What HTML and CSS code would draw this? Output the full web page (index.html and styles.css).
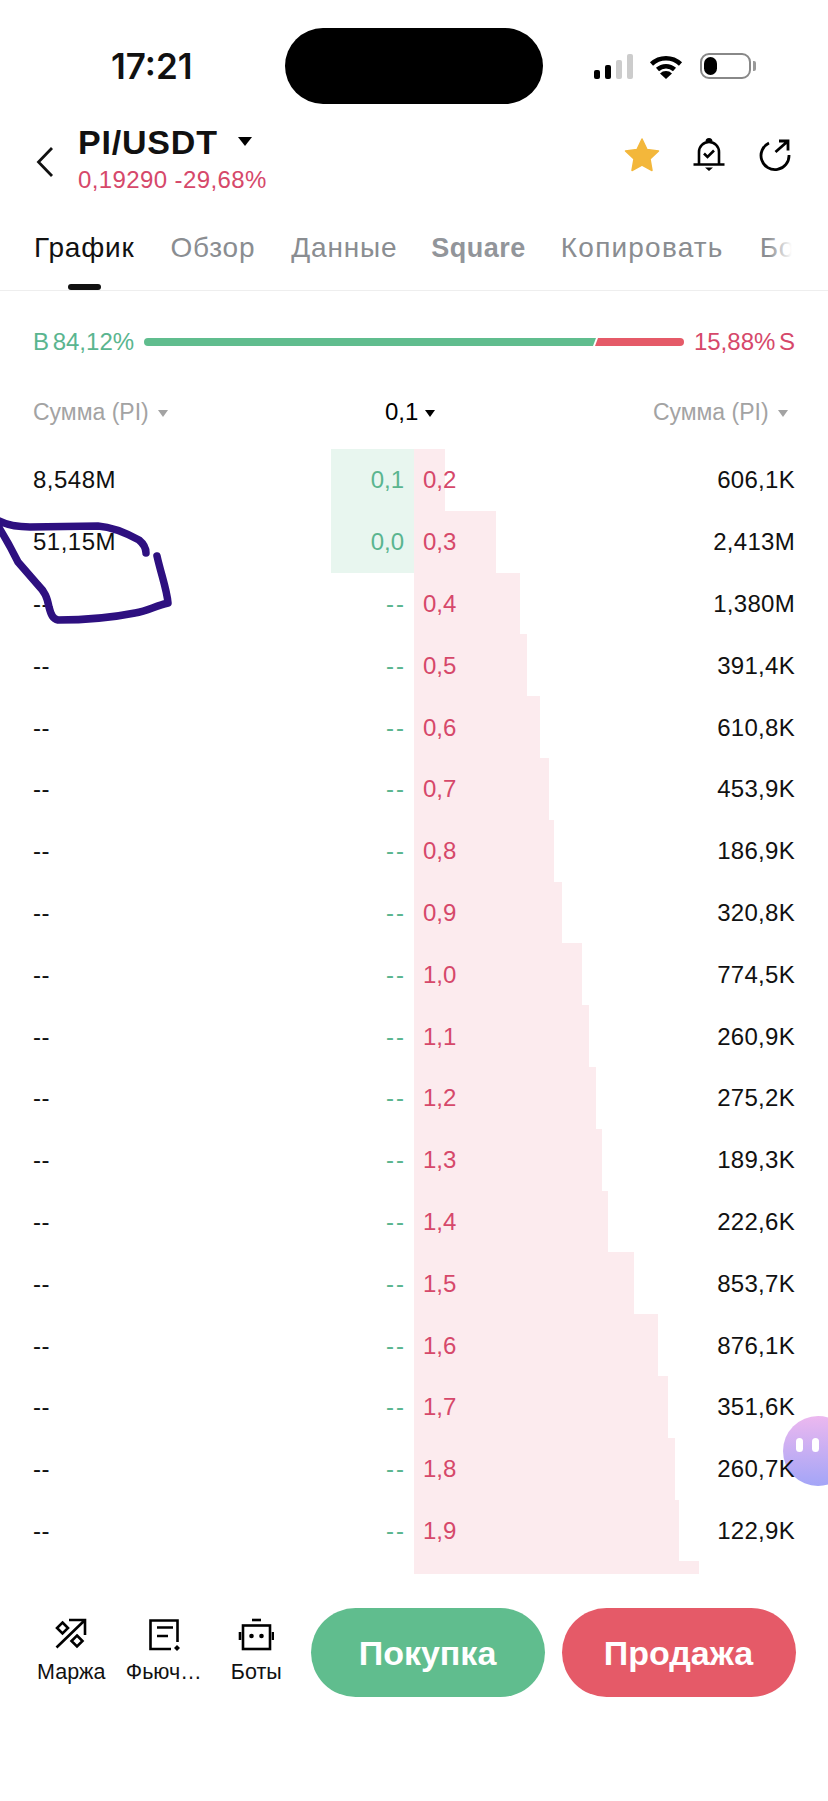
FILE: index.html
```html
<!DOCTYPE html>
<html lang="ru">
<head>
<meta charset="utf-8">
<title>PI/USDT</title>
<link rel="stylesheet" href="styles.css">
</head>
<body>
<div class="page">
  <div class="status">
    <div class="time">17:21</div>
    <div class="island"></div>
    <div class="sys">
      <div class="signal"><i class="s1"></i><i class="s2"></i><i class="s3"></i><i class="s4"></i></div>
      <svg class="wifi" width="34" height="25" viewBox="0 0 34 25"><path d="M2.5 10A21 21 0 0 1 31.500 10M8.500 15.500A12.500 12.500 0 0 1 25.500 15.500" fill="none" stroke="#000" stroke-width="4.500"/><path d="M17 25L11 19.500A8.500 8.500 0 0 1 23 19.500Z" fill="#000"/></svg>
      <div class="battery"><i></i></div>
      <div class="nub"></div>
    </div>
  </div>

  <div class="nav">
    <svg class="back" width="18" height="32" viewBox="0 0 18 32"><path d="M16 2L2.500 16L16 30" fill="none" stroke="#111" stroke-width="2.800"/></svg>
    <div class="pair">
      <div class="pair-name">PI/USDT <span class="caret caret-lg"></span></div>
      <div class="pair-price">0,19290 -29,68%</div>
    </div>
    <div class="nav-icons">
      <svg width="36" height="36" viewBox="0 0 36 36"><path d="M18 2L23 12.500L34.500 14L26 22L28 33.500L18 28L8 33.500L10 22L1.500 14L13 12.500Z" fill="#f3b73b" stroke="#f3b73b" stroke-width="1.500" stroke-linejoin="round"/></svg>
      <svg width="34" height="36" viewBox="0 0 34 36"><path d="M7 27V15A10 10 0 0 1 27 15V27M1.500 27.500H32.500" fill="none" stroke="#000" stroke-width="2.600"/><path d="M13.500 4.500A3.500 3.500 0 0 1 20.500 4.500ZM13 30.500H21L17 34Z" fill="#000"/><path d="M12 16.500L15.500 20L22 13.500" fill="none" stroke="#000" stroke-width="2.600"/></svg>
      <svg width="34" height="34" viewBox="0 0 34 34"><path d="M11 5A14 14 0 1 0 31 17" fill="none" stroke="#000" stroke-width="2.800"/><path d="M17.500 14L30 3M21 3H30V12.500" fill="none" stroke="#000" stroke-width="2.800"/></svg>
    </div>
  </div>

  <div class="tabs">
    <div class="tab active">График</div>
    <div class="tab">Обзор</div>
    <div class="tab">Данные</div>
    <div class="tab strong">Square</div>
    <div class="tab wide">Копировать</div>
    <div class="tab">Боты</div>
  </div>

  <div class="ratio">
    <div class="ratio-buy">B 84,12%</div>
    <div class="ratio-bar"><div class="ratio-g"></div><div class="ratio-r"></div></div>
    <div class="ratio-sell">15,88% S</div>
  </div>

  <div class="head">
    <div class="head-l">Сумма (PI) <span class="caret caret-grey"></span></div>
    <div class="head-m">0,1 <span class="caret"></span></div>
    <div class="head-r">Сумма (PI) <span class="caret caret-grey"></span></div>
  </div>

  <div class="bubble"><i></i><i></i></div>

  <div class="book">
    <div class="row"><span class="ask-bar" style="width:31px"></span><span class="bid-bar"></span><span class="ql">8,548M</span><span class="bid">0,1</span><span class="ask">0,2</span><span class="qr">606,1K</span></div>
    <div class="row"><span class="ask-bar" style="width:82px"></span><span class="bid-bar"></span><span class="ql">51,15M</span><span class="bid">0,0</span><span class="ask">0,3</span><span class="qr">2,413M</span></div>
    <div class="row"><span class="ask-bar" style="width:106px"></span><span class="ql">--</span><span class="bid dash">--</span><span class="ask">0,4</span><span class="qr">1,380M</span></div>
    <div class="row"><span class="ask-bar" style="width:113px"></span><span class="ql">--</span><span class="bid dash">--</span><span class="ask">0,5</span><span class="qr">391,4K</span></div>
    <div class="row"><span class="ask-bar" style="width:126px"></span><span class="ql">--</span><span class="bid dash">--</span><span class="ask">0,6</span><span class="qr">610,8K</span></div>
    <div class="row"><span class="ask-bar" style="width:135px"></span><span class="ql">--</span><span class="bid dash">--</span><span class="ask">0,7</span><span class="qr">453,9K</span></div>
    <div class="row"><span class="ask-bar" style="width:140px"></span><span class="ql">--</span><span class="bid dash">--</span><span class="ask">0,8</span><span class="qr">186,9K</span></div>
    <div class="row"><span class="ask-bar" style="width:148px"></span><span class="ql">--</span><span class="bid dash">--</span><span class="ask">0,9</span><span class="qr">320,8K</span></div>
    <div class="row"><span class="ask-bar" style="width:168px"></span><span class="ql">--</span><span class="bid dash">--</span><span class="ask">1,0</span><span class="qr">774,5K</span></div>
    <div class="row"><span class="ask-bar" style="width:175px"></span><span class="ql">--</span><span class="bid dash">--</span><span class="ask">1,1</span><span class="qr">260,9K</span></div>
    <div class="row"><span class="ask-bar" style="width:182px"></span><span class="ql">--</span><span class="bid dash">--</span><span class="ask">1,2</span><span class="qr">275,2K</span></div>
    <div class="row"><span class="ask-bar" style="width:188px"></span><span class="ql">--</span><span class="bid dash">--</span><span class="ask">1,3</span><span class="qr">189,3K</span></div>
    <div class="row"><span class="ask-bar" style="width:194px"></span><span class="ql">--</span><span class="bid dash">--</span><span class="ask">1,4</span><span class="qr">222,6K</span></div>
    <div class="row"><span class="ask-bar" style="width:220px"></span><span class="ql">--</span><span class="bid dash">--</span><span class="ask">1,5</span><span class="qr">853,7K</span></div>
    <div class="row"><span class="ask-bar" style="width:244px"></span><span class="ql">--</span><span class="bid dash">--</span><span class="ask">1,6</span><span class="qr">876,1K</span></div>
    <div class="row"><span class="ask-bar" style="width:254px"></span><span class="ql">--</span><span class="bid dash">--</span><span class="ask">1,7</span><span class="qr">351,6K</span></div>
    <div class="row"><span class="ask-bar" style="width:261px"></span><span class="ql">--</span><span class="bid dash">--</span><span class="ask">1,8</span><span class="qr">260,7K</span></div>
    <div class="row"><span class="ask-bar" style="width:265px"></span><span class="ql">--</span><span class="bid dash">--</span><span class="ask">1,9</span><span class="qr">122,9K</span></div>
    <div class="row row-cut"><span class="ask-bar" style="width:285px"></span></div>
  </div>

  <div class="actions">
    <div class="tool">
      <svg width="36" height="36" viewBox="0 0 36 36"><path d="M3.500 30.500L32 3M16 3H32V18" fill="none" stroke="#000" stroke-width="2.600"/><path d="M9.500 5.500L15 11L9.500 16.500L4 11ZM24 18.500L29.500 24L24 29.500L18.500 24Z" fill="none" stroke="#000" stroke-width="2.600"/></svg>
      <span>Маржа</span>
    </div>
    <div class="tool">
      <svg width="36" height="36" viewBox="0 0 36 36"><path d="M31.500 25V3.500H4.500V32H25M11 10.500H27M11 19H22" fill="none" stroke="#000" stroke-width="2.600"/><path d="M31 28L34 31L31 34L28 31Z" fill="#000"/></svg>
      <span>Фьюч…</span>
    </div>
    <div class="tool">
      <svg width="36" height="36" viewBox="0 0 36 36"><path d="M14 3H23" fill="none" stroke="#000" stroke-width="2.600"/><rect x="5" y="8.500" width="27" height="23.500" fill="none" stroke="#000" stroke-width="2.600"/><path d="M2 15V23M35 15V23" fill="none" stroke="#000" stroke-width="2.600"/><circle cx="13.500" cy="19" r="2.300" fill="#000"/><circle cx="23.500" cy="19" r="2.300" fill="#000"/></svg>
      <span>Боты</span>
    </div>
    <div class="btn btn-buy">Покупка</div>
    <div class="btn btn-sell">Продажа</div>
  </div>

  <svg class="scribble" width="180" height="110" viewBox="0 0 180 110"><path d="M-3 8C8 14 18 15 30 15L98 14C112 15 128 22 139 28C145 33 146 37 146 41M157 44C161 62 167 78 168 91C155 94 148 99 135 101C110 106 85 108 58 108C53 107 51 103 49 95C47 85 45 80 38 73L18 50C12 38 6 27 -2 14" fill="none" stroke="#2e1080" stroke-width="7.500" stroke-linecap="round" stroke-linejoin="round"/></svg>
</div>
</body>
</html>
```
FILE: styles.css
```css
* { box-sizing: border-box; }
html, body { margin: 0; padding: 0; background: #fff; }
body { font-family: "Liberation Sans", Arial, sans-serif; color: #111; }
.page { position: relative; width: 828px; height: 1801px; overflow: hidden; }

/* status bar */
.status { height: 120px; padding: 28px 0 16px; display: flex; align-items: center; }
.time { width: 285px; padding-left: 111px; font-family: Inter, "Liberation Sans", sans-serif; font-size: 35px; font-weight: 600; line-height: 76px; }
.island { width: 258px; height: 76px; border-radius: 38px; background: #000; }
.sys { display: flex; align-items: flex-end; height: 26px; margin-left: 51px; margin-top: -1px; }
.signal { display: flex; align-items: flex-end; gap: 5px; height: 25px; margin-right: 16px; }
.signal i { display: block; width: 6px; border-radius: 2px; background: #000; }
.signal .s1 { height: 9px; }
.signal .s2 { height: 14px; }
.signal .s3 { height: 19px; background: #ccc; }
.signal .s4 { height: 25px; background: #ccc; }
.wifi { margin-right: 17px; }
.battery { width: 51px; height: 26px; padding: 2px; border: 2px solid #888; border-radius: 9px; }
.battery i { display: block; width: 13px; height: 100%; border-radius: 7px; background: #000; }
.nub { width: 3px; height: 10px; margin: 0 0 8px 2px; border-radius: 0 2px 2px 0; background: #999; }

/* nav */
.nav { height: 76px; display: flex; align-items: center; padding-left: 36px; }
.back { margin: 8px 24px 0 0; }
.pair-name { font-size: 34px; line-height: 44px; font-weight: 700; letter-spacing: 0.8px; white-space: nowrap; }
.pair-price { font-size: 24px; line-height: 32px; letter-spacing: 0.4px; color: #d6486a; white-space: nowrap; }
.caret { display: inline-block; width: 0; height: 0; border-left: 5.500px solid transparent; border-right: 5.500px solid transparent; border-top: 7px solid #000; vertical-align: middle; }
.caret-lg { border-left-width: 7px; border-right-width: 7px; border-top-width: 9px; margin: -8px 0 0 10px; }
.caret-grey { border-top-color: #a3a3a3; margin-left: 3px; }
.nav-icons { margin-left: auto; display: flex; align-items: center; gap: 32px; padding: 0 36px 6px 0; }

/* tabs */
.tabs { position: relative; height: 95px; padding: 32px 0 0 34px; display: flex; gap: 36px; overflow: hidden; border-bottom: 1px solid #eee; }
.tabs::after { content: ""; position: absolute; top: 0; bottom: 0; left: 768px; width: 60px; background: linear-gradient(90deg, rgba(255,255,255,0), #fff 40%); }
.tab { position: relative; font-size: 28px; letter-spacing: 0.8px; line-height: 40px; color: #8a8d91; white-space: nowrap; }
.tab.strong { margin: 0 -1px 0 -2px; font-weight: 700; font-size: 27px; letter-spacing: 0.5px; color: #92959a; }
.tab.wide { letter-spacing: 1.200px; }
.tab.active { color: #111; }
.tab.active::after { content: ""; position: absolute; left: 34px; top: 56px; width: 33px; height: 6px; border-radius: 3px; background: #111; }

/* ratio */
.ratio { margin-top: 36px; height: 30px; padding: 0 33px; display: flex; align-items: center; font-size: 24px; white-space: nowrap; word-spacing: -3px; }
.ratio-buy { width: 111px; color: #5ab58f; }
.ratio-sell { margin-left: auto; color: #d6486a; }
.ratio-bar { display: flex; width: 540px; height: 8px; }
.ratio-g { width: 452px; background: #60bd8e; border-radius: 4px 0 0 4px; clip-path: polygon(0 0, 100% 0, calc(100% - 3px) 100%, 0 100%); }
.ratio-r { width: 89px; margin-left: -1px; background: #e55a68; border-radius: 0 4px 4px 0; clip-path: polygon(3px 0, 100% 0, 100% 100%, 0 100%); }

/* list head */
.head { margin-top: 40px; height: 30px; padding: 0 40px 0 33px; display: flex; align-items: center; font-size: 23px; white-space: nowrap; }
.head-l, .head-r { color: #a3a3a3; }
.head-l { width: 352px; }
.head-m { color: #000; font-size: 24px; }
.head-r { margin-left: auto; }

/* order book */
.book { margin-top: 22px; }
.row { position: relative; height: 61.800px; padding-top: 1px; display: flex; align-items: center; font-size: 24px; }
.row-cut { height: 12.600px; padding: 0; }
.row > span:not(.ask-bar):not(.bid-bar) { position: relative; }
.ask-bar { position: absolute; left: 414px; top: 0; bottom: 0; background: #fcebee; }
.bid-bar { position: absolute; left: 331px; width: 83px; top: 0; bottom: 0; background: #e8f6ef; }
.ql { width: 333px; padding-left: 33px; letter-spacing: 0.5px; }
.bid { width: 71px; text-align: right; color: #5ab58f; }
.bid.dash { width: 73px; margin-right: -2px; letter-spacing: 2px; }
.ask { margin-left: 19px; color: #d6486a; }
.qr { margin-left: auto; padding-right: 33px; letter-spacing: 0.3px; }

/* bottom actions */
.actions { margin-top: 34px; padding-left: 25px; display: flex; align-items: flex-start; }
.tool { width: 92.500px; height: 89px; display: flex; flex-direction: column; align-items: center; padding-top: 9px; font-size: 21.500px; white-space: nowrap; }
.tool span { margin-top: 6px; line-height: 26px; }
.btn { height: 89px; width: 234px; padding-top: 2px; border-radius: 45px; color: #fff; font-size: 34px; font-weight: 700; display: flex; align-items: center; justify-content: center; }
.btn-buy { margin-left: 8px; background: #60bd8e; }
.btn-sell { margin-left: 17px; background: #e55a68; }

/* overlays */
.scribble { position: absolute; left: 0; top: 512px; overflow: visible; }
.bubble { position: absolute; left: 783px; top: 1416px; width: 70px; height: 70px; border-radius: 50%; background: linear-gradient(180deg, #ecb8ef, #a3a5f7); padding: 22px 0 0 13px; display: flex; gap: 9px; align-items: flex-start; }
.bubble i { display: block; width: 7px; height: 14px; border-radius: 4px; background: #fff; }
```
